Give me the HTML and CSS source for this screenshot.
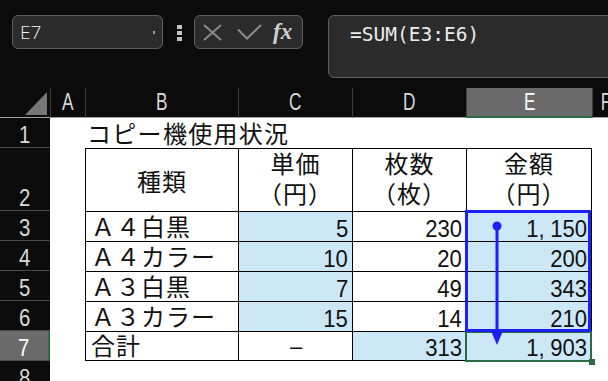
FILE: index.html
```html
<!DOCTYPE html>
<html lang="ja">

<head>
    <meta charset="UTF-8">
    <meta name="viewport" content="width=device-width, initial-scale=1.0">
    <title>コピー機使用状況</title>
    <link rel="stylesheet" href="styles.css">
</head>

<body>
    <!-- Строка формул -->
    <div class="formula-bar">
        <div class="name-box"><span>E7</span><span class="drop"></span></div>
        <div class="grip"><i></i><i></i><i></i></div>
        <div class="fx-box">
            <svg class="ic-x" width="19" height="17" viewBox="0 0 19 17">
                <path d="M1 1 L18 16 M18 1 L1 16" />
            </svg>
            <svg class="ic-ok" width="25" height="16" viewBox="0 0 25 16">
                <path d="M1 5.5 L10 14.5 L24 1" />
            </svg>
            <span class="fx">fx</span>
        </div>
        <div class="formula-input">=SUM(E3:E6)</div>
    </div>

    <!-- Лист -->
    <div class="sheet">
        <div class="ch corner"><b class="tri"></b></div>
        <div class="ch"><span>A</span></div>
        <div class="ch"><span>B</span></div>
        <div class="ch"><span>C</span></div>
        <div class="ch"><span>D</span></div>
        <div class="ch sel"><span>E</span></div>
        <div class="ch"><span>F</span></div>

        <div class="rh"><span>1</span></div>
        <div class="c"></div>
        <div class="c title">コピー機使用状況</div>
        <div class="c"></div>

        <div class="rh"><span>2</span></div>
        <div class="c"></div>
        <div class="c t hd1">種類</div>
        <div class="c t hd2"><span>単価</span><span>（円）</span></div>
        <div class="c t hd2"><span>枚数</span><span>（枚）</span></div>
        <div class="c t t-r hd2"><span>金額</span><span>（円）</span></div>
        <div class="c"></div>

        <div class="rh"><span>3</span></div>
        <div class="c"></div>
        <div class="c t txt">Ａ４白黒</div>
        <div class="c t num fill"><span class="n">5</span></div>
        <div class="c t num"><span class="n">230</span></div>
        <div class="c t t-r num fill"><span class="n">1<i class="cm">,</i>150</span></div>
        <div class="c"></div>

        <div class="rh"><span>4</span></div>
        <div class="c"></div>
        <div class="c t txt">Ａ４カラー</div>
        <div class="c t num fill"><span class="n">10</span></div>
        <div class="c t num"><span class="n">20</span></div>
        <div class="c t t-r num fill"><span class="n">200</span></div>
        <div class="c"></div>

        <div class="rh"><span>5</span></div>
        <div class="c"></div>
        <div class="c t txt">Ａ３白黒</div>
        <div class="c t num fill"><span class="n">7</span></div>
        <div class="c t num"><span class="n">49</span></div>
        <div class="c t t-r num fill"><span class="n">343</span></div>
        <div class="c"></div>

        <div class="rh"><span>6</span></div>
        <div class="c"></div>
        <div class="c t txt">Ａ３カラー</div>
        <div class="c t num fill"><span class="n">15</span></div>
        <div class="c t num"><span class="n">14</span></div>
        <div class="c t t-r num fill"><span class="n">210</span></div>
        <div class="c"></div>

        <div class="rh sel"><span>7</span></div>
        <div class="c"></div>
        <div class="c t t-b txt">合計</div>
        <div class="c t t-b dash"><span class="n">–</span></div>
        <div class="c t t-b num fill"><span class="n">313</span></div>
        <div class="c t t-r t-b num fill active"><span class="n">1<i class="cm">,</i>903</span></div>
        <div class="c"></div>

        <div class="rh"><span>8</span></div>
        <div class="c rest"></div>

        <!-- Выделенный диапазон и стрелка -->
        <div class="sel-range"></div>
        <svg class="fill-arrow" width="24" height="130" viewBox="0 0 24 130">
            <circle cx="12" cy="8" r="4.5" />
            <line x1="12" y1="8" x2="12" y2="118" />
            <polygon points="6.5,114 17.5,114 12,127" />
        </svg>
    </div>
</body>

</html>
```

FILE: styles.css
```css
html,
body {
    margin: 0;
    padding: 0;
    height: 381px;
    overflow: hidden;
}

body {
    background-color: #0b0b0b;
    font-family: "Liberation Sans", "Noto Sans CJK JP", sans-serif;
}

/* строка формул */

.formula-bar {
    height: 88px;
    width: 640px;
    box-sizing: border-box;
    padding: 15px 0 0 12px;
    display: flex;
    align-items: flex-start;
}

.name-box,
.fx-box,
.formula-input {
    box-sizing: border-box;
    background-color: #2b2b2b;
    border: 1px solid #5e5e5e;
    border-radius: 6px;
}

.name-box {
    width: 151px;
    height: 34px;
    display: flex;
    align-items: center;
    justify-content: space-between;
    padding: 0 7px 0 7px;
    color: #f2f2f2;
    font: 300 19px "Open Sans", sans-serif;
}

.name-box .drop {
    width: 2px;
    height: 3px;
    background-color: #9c9c9c;
}

.grip {
    width: 5px;
    display: flex;
    flex-direction: column;
    gap: 2px;
    margin: 10px 12px 0 14px;
}

.grip i {
    display: block;
    width: 5px;
    height: 4px;
    background-color: #c4c4c4;
}

.fx-box {
    width: 109px;
    height: 34px;
    display: flex;
    align-items: center;
    padding-left: 8px;
}

.fx-box svg {
    fill: none;
    stroke: #8a8a8a;
    stroke-width: 2;
}

.ic-ok {
    margin-left: 15px;
}

.fx {
    margin-left: 11px;
    color: #cfcfcf;
    font: italic bold 23px "Liberation Serif", serif;
    line-height: 24px;
}

.formula-input {
    width: 300px;
    height: 63px;
    margin-left: 25px;
    padding: 7px 0 0 21px;
    color: #ececec;
    font: 19.5px "DejaVu Sans Mono", monospace;
}

/* лист */

.sheet {
    position: relative;
    display: grid;
    grid-template-columns: 50px 35px 153px 114px 114px 126px 28px;
    grid-template-rows: 30px 30px 63px repeat(6, 30px);
    width: 620px;
    background-color: #ffffff;
}

.ch {
    display: flex;
    align-items: flex-end;
    justify-content: center;
    padding-bottom: 3px;
    background-color: #0b0b0b;
    border-left: 1px solid #3c3c3c;
    border-bottom: 1px solid #a3a3a3;
    color: #d9d9d9;
    font: 23px/23px "Liberation Sans", sans-serif;
}

.ch span,
.rh span {
    display: inline-block;
    transform: scaleX(0.75);
}

.ch.corner {
    border-left: none;
    justify-content: flex-end;
    padding: 0 3px 2px 0;
}

.tri {
    display: block;
    width: 22px;
    height: 23px;
    background-color: #777777;
    clip-path: polygon(100% 0, 100% 100%, 0 100%);
}

.ch.sel {
    background-color: #6a6a6a;
    border-bottom: 2px solid #2a6b44;
    color: #ffffff;
    padding-bottom: 2px;
}

.rh {
    display: flex;
    align-items: flex-end;
    justify-content: center;
    background-color: #0b0b0b;
    border-bottom: 1px solid #4a4a4a;
    color: #d9d9d9;
    font: 24px/24px "Liberation Sans", sans-serif;
}

.rh span {
    transform: scaleX(0.85);
}

.rh.sel {
    background-color: #6a6a6a;
    border-right: 2px solid #2a6b44;
    color: #ffffff;
}

.c {
    display: flex;
    box-sizing: border-box;
    color: #111111;
    font-size: 24px;
    line-height: 24px;
    letter-spacing: 1px;
}

.c.rest {
    grid-column: span 6;
}

.title {
    grid-column: span 4;
    align-items: flex-end;
    padding: 0 0 1px 2px;
    white-space: nowrap;
    letter-spacing: 1.3px;
}

/* границы таблицы */

.t {
    border-left: 1px solid #000000;
    border-top: 1px solid #000000;
}

.t-r {
    border-right: 1px solid #000000;
}

.t-b {
    border-bottom: 1px solid #000000;
}

.fill {
    background-color: #cce8f7;
}

.hd1 {
    align-items: center;
    justify-content: center;
    padding-top: 6px;
}

.hd2 {
    flex-direction: column;
    align-items: center;
    justify-content: flex-end;
    line-height: 30px;
    padding-bottom: 1px;
}

.txt {
    align-items: flex-end;
    padding: 0 0 1px 5px;
    white-space: nowrap;
}

.num,
.dash {
    align-items: flex-end;
    justify-content: flex-end;
    padding-right: 4px;
}

.dash {
    justify-content: center;
    padding: 0 0 2px 0;
}

.n {
    display: inline-block;
    font: 24px/24px "Liberation Sans", sans-serif;
    letter-spacing: 0;
    transform: scaleX(0.92);
    transform-origin: right bottom;
}

.n .cm {
    font-style: normal;
    margin-right: 6px;
}

/* активная ячейка E7 */

.active {
    position: relative;
}

.active::after {
    content: "";
    position: absolute;
    top: -1px;
    left: -2px;
    right: -1px;
    bottom: -2px;
    border: 2px solid #2a6b44;
}

.active::before {
    content: "";
    position: absolute;
    right: -4px;
    bottom: -5px;
    width: 6px;
    height: 6px;
    background-color: #2a6b44;
    z-index: 1;
}

.sel-range {
    position: absolute;
    left: 465px;
    top: 122px;
    width: 126px;
    height: 122px;
    box-sizing: border-box;
    border: 3px solid #1e1efa;
}

.fill-arrow {
    position: absolute;
    left: 485px;
    top: 130px;
    fill: #1e1efa;
    stroke: #1e1efa;
}

.fill-arrow line {
    stroke-width: 3;
}

.fill-arrow circle,
.fill-arrow polygon {
    stroke: none;
}
```
